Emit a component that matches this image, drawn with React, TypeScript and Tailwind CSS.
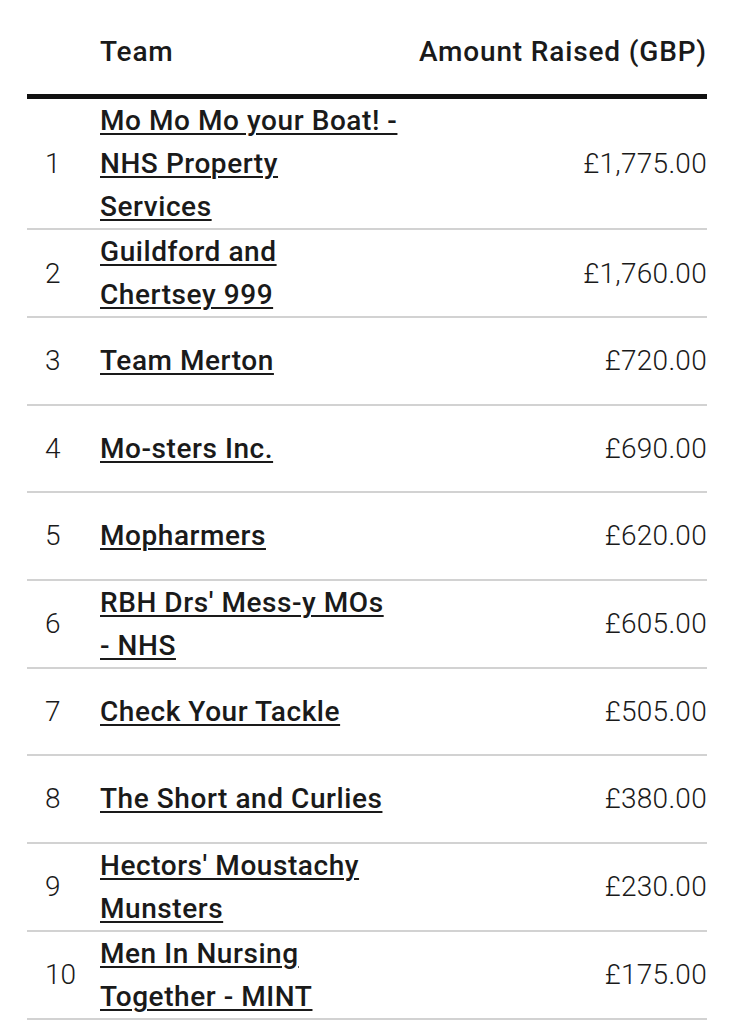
import React from 'react';

interface TeamRow {
  rank: number;
  name: string[];
  amount: string;
}

const rows: TeamRow[] = [
  { rank: 1, name: ['Mo Mo Mo your Boat! -', 'NHS Property', 'Services'], amount: '£1,775.00' },
  { rank: 2, name: ['Guildford and', 'Chertsey 999'], amount: '£1,760.00' },
  { rank: 3, name: ['Team Merton'], amount: '£720.00' },
  { rank: 4, name: ['Mo-sters Inc.'], amount: '£690.00' },
  { rank: 5, name: ['Mopharmers'], amount: '£620.00' },
  { rank: 6, name: ["RBH Drs' Mess-y MOs", '- NHS'], amount: '£605.00' },
  { rank: 7, name: ['Check Your Tackle'], amount: '£505.00' },
  { rank: 8, name: ['The Short and Curlies'], amount: '£380.00' },
  { rank: 9, name: ["Hectors' Moustachy", 'Munsters'], amount: '£230.00' },
  { rank: 10, name: ['Men In Nursing', 'Together - MINT'], amount: '£175.00' },
];

const App: React.FC = () => {
  return (
    <div className="min-h-screen bg-white text-[#1a1a1a] font-['Roboto','Liberation_Sans',sans-serif] text-[28px]">
      <div className="mx-[27px]">
        {/* Header */}
        <div className="flex h-[99px] items-start pt-[30px] leading-[43px] font-medium tracking-[0.03em] border-b-[5px] border-[#111]">
          <div className="w-[73px]" />
          <div className="flex-1">Team</div>
          <div className="text-right">Amount Raised (GBP)</div>
        </div>

        {/* Rows */}
        {rows.map((row) => (
          <div
            key={row.rank}
            className="flex min-h-[87.5px] items-center leading-[43px] border-b-2 border-[#d2d2d2]"
          >
            <div className="w-[73px] pl-[18px] font-light">{row.rank}</div>
            <div className="flex-1 font-medium tracking-[0.02em]">
              {row.name.map((line, i) => (
                <div key={i}>
                  <a href="#" className="underline decoration-[2px] underline-offset-[3px]">
                    {line}
                  </a>
                </div>
              ))}
            </div>
            <div className="text-right font-light tracking-[0.01em]">{row.amount}</div>
          </div>
        ))}
      </div>
    </div>
  );
};

export default App;
